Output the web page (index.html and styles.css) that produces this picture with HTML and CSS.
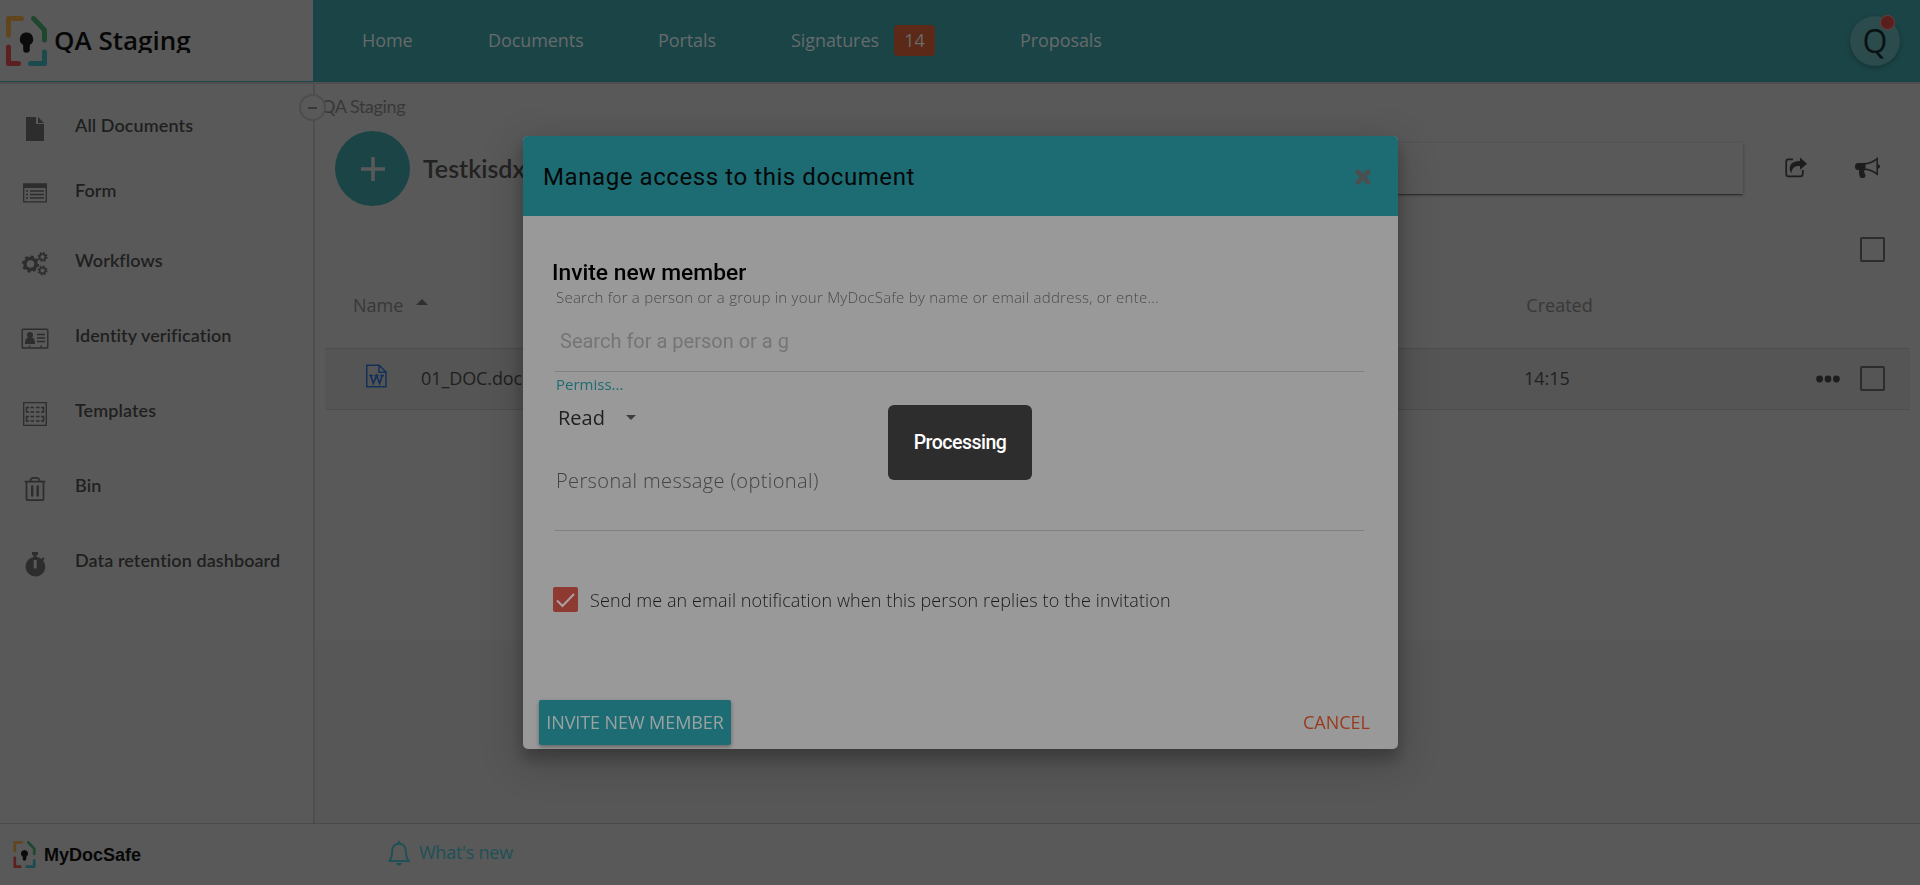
FILE: index.html
```html
<!DOCTYPE html>
<html lang="en">
<head>
<meta charset="utf-8">
<title>QA Staging</title>
<link rel="stylesheet" href="styles.css">
</head>
<body>
<svg class="defs" width="0" height="0">
  <symbol id="logo" viewBox="0 0 41 50">
    <g fill="none" stroke-width="5" stroke-linecap="round" stroke-linejoin="round">
      <path stroke="#60451f" d="M2.5 19V2.5H15.5"/>
      <path stroke="#1f472f" d="M27.5 2.5L38.500 14V24"/>
      <path stroke="#5c2020" d="M2.500 31V47.500H12.500"/>
      <path stroke="#1d4a4e" d="M38.500 36V47.500H24.500"/>
    </g>
    <path fill="#0b0b0b" d="M20.500 16.500a6.700 6.700 0 0 1 3.300 12.500v4.500a3.300 3.300 0 0 1-6.600 0V29a6.700 6.700 0 0 1 3.300-12.500z"/>
  </symbol>
</svg>
<div class="app">
  <header class="top">
    <div class="brand"><svg class="brand-logo"><use href="#logo"/></svg><span class="brand-name">QA Staging</span></div>
    <nav class="nav">
      <a class="n1">Home</a><a class="n2">Documents</a><a class="n3">Portals</a><a class="n4">Signatures</a><span class="badge">14</span><a class="n5">Proposals</a>
      <div class="avatar">Q<i class="dot"></i></div>
    </nav>
  </header>
  <div class="body">
    <aside class="side">
      <span class="collapse"></span>
      <a class="item i1"><svg viewBox="0 0 28 28"><path fill="#2d2d2d" d="M5 2h10v7h8v17H5zM17 2l6 6h-6z"/></svg>All Documents</a>
      <a class="item i2"><svg viewBox="0 0 28 28"><path fill="none" stroke="#2d2d2d" stroke-width="1.300" d="M2.700 4.200h22.600v17.600H2.700z"/><path fill="#2d2d2d" d="M2 3.500h24V8H2z"/><path stroke="#2d2d2d" stroke-width="1.400" d="M5 11h2M5 14.500h2M5 18h2M9 11h14M9 14.500h14M9 18h14"/></svg>Form</a>
      <a class="item i3"><svg viewBox="0 0 28 28"><g fill="none" stroke="#2d2d2d"><circle cx="9.500" cy="14" r="5.500" stroke-width="3.400"/><circle cx="9.500" cy="14" r="7.600" stroke-width="2" stroke-dasharray="3 2.969"/><circle cx="21.500" cy="7" r="2.900" stroke-width="1.600"/><circle cx="21.500" cy="7" r="4.300" stroke-width="1.500" stroke-dasharray="1.700 1.677"/><circle cx="21.500" cy="20.500" r="2.900" stroke-width="1.600"/><circle cx="21.500" cy="20.500" r="4.300" stroke-width="1.500" stroke-dasharray="1.700 1.677"/></g></svg>Workflows</a>
      <a class="item i4"><svg viewBox="0 0 28 28"><rect x="1.200" y="4.200" width="25.600" height="18.800" rx="1" fill="none" stroke="#2d2d2d" stroke-width="1.400"/><circle cx="9" cy="10" r="3" fill="#2d2d2d"/><path fill="#2d2d2d" d="M4 19c0-4 1-6 3-6.500h4c2 .5 3 2.500 3 6.500z"/><path stroke="#2d2d2d" stroke-width="1.500" d="M16 9.500h8M16 13h8M16 16.500h8M8.500 20.500v2M20 20.500v2"/></svg>Identity verification</a>
      <a class="item i5"><svg viewBox="0 0 28 28"><path fill="none" stroke="#2d2d2d" stroke-width="1.300" d="M2.700 2.700h22.600v22.600H2.700z"/><path fill="none" stroke="#2d2d2d" stroke-width="1.500" d="M8 7.500H5.500v4.500H8M20 7.500h2.500v4.500H20M8 16.500H5.500V21H8M20 16.500h2.500V21H20M9.500 7.500h3.500M15 7.500h3.500M9.500 12h3.500M15 12h3.500M9.500 16.500h3.500M15 16.500h3.500M9.500 21h3.500M15 21h3.500"/></svg>Templates</a>
      <a class="item i6"><svg viewBox="0 0 28 28"><path fill="none" stroke="#2d2d2d" stroke-width="1.700" d="M3.700 6.700h20.600M5.500 7v17.300q0 .8.800.8h15.400q.8 0 .8-.8V7M9 6.500q1-3.600 3-3.600h4q2 0 3 3.600"/><path stroke="#2d2d2d" stroke-width="2.400" stroke-linecap="round" d="M11.200 11.500v9M16.700 11.500v9"/></svg>Bin</a>
      <a class="item i7"><svg viewBox="0 0 28 28"><path fill="#2d2d2d" fill-rule="evenodd" d="M11 2h6v3h-1.500v2c2 .2 3.600 1 5 2l1.500-1.700 1.600 1.400-1.500 1.800a9.800 9.800 0 1 1-9.600-3.500V5H11zM12.700 10v8.500h3V10z"/></svg>Data retention dashboard</a>
    </aside>
    <main class="main">
      <div class="crumb">QA Staging</div>
      <div class="tools">
        <span class="add"><svg width="24" height="24"><path stroke="#595959" stroke-width="3.600" d="M12 0v24M0 12h24"/></svg></span>
        <h1>Testkisdx</h1>
        <div class="search"></div>
        <svg class="share" viewBox="0 0 22 20"><path fill="none" stroke="#1d1d1d" stroke-width="1.700" d="M8 1.900H3.500Q1.200 1.900 1.200 4.200v12Q1.200 18.900 3.500 18.900H15q2.800 0 2.800-2.700v-3.800"/><path fill="#1d1d1d" d="M15 0l7 6.200-7 6V8.500c-5 0-7.600.8-8.800 7.500C2.500 9 6 3.600 15 3.600z"/></svg>
        <svg class="horn" viewBox="0 0 25 21"><path fill="#1d1d1d" d="M3 5.500h7.500v7H9.500c-.8 1.500 0 3.200 1 5l-.6 2.400c-1.700.8-3.600.8-4.700 0C3.800 17 3.900 15 4.200 12.500H3Q0 12.500 0 9t3-3.500z"/><path fill="none" stroke="#1d1d1d" stroke-width="1.500" d="M9 6.300c5 0 9-1.700 13.200-5.200v15.600C18 13.500 14 11.800 9 11.800"/><path fill="#1d1d1d" d="M23 6.800q2 .6 2 2.200t-2 2.300z"/></svg>
      </div>
      <div class="selectall"><span class="box"></span></div>
      <div class="thead"><span>Name</span><i class="up"></i><span class="created">Created</span></div>
      <div class="row">
        <svg class="word" viewBox="0 0 21 23"><path fill="none" stroke="#14305a" stroke-width="1.500" d="M.8.8h12.400l6.800 6.700v14.700H.8zM13 .8v7h7"/><path fill="none" stroke="#14305a" stroke-width="1.700" d="M3 11h4M8.500 11h4M14 11h4M4.800 11l2.500 8 3.200-8 3.200 8 2.500-8"/></svg>
        <span class="file">01_DOC.doc</span>
        <span class="time">14:15</span>
        <svg class="more" width="24" height="8"><g fill="#1d1d1d"><circle cx="3.600" cy="4" r="3.400"/><circle cx="12" cy="4" r="3.400"/><circle cx="20.400" cy="4" r="3.400"/></g></svg>
        <span class="box"></span>
      </div>
      <div class="rest"></div>
    </main>
  </div>
  <footer class="foot">
    <svg class="foot-logo"><use href="#logo"/></svg><b>MyDocSafe</b>
    <svg class="bell" viewBox="0 0 22 25"><path fill="none" stroke="#1d5156" stroke-width="2" stroke-linejoin="round" d="M1.200 20c2-2.300 3-4 3-10.500C4.500 5 7.500 2.700 11 2.700s6.500 2.300 6.800 6.800c0 6.500 1 8.200 3 10.500z"/><path fill="#1d5156" d="M9.700 0h2.600v3H9.700zM8 22h6q-.8 2.700-3 2.700T8 22z"/></svg><span class="new">What's new</span>
  </footer>
</div>
<div class="overlay">
  <section class="modal">
    <div class="mhead"><span>Manage access to this document</span><svg width="16" height="16" viewBox="0 0 16 16"><path stroke="#4a4f50" stroke-width="5" stroke-linecap="round" d="M3 3l10 10M13 3L3 13"/></svg></div>
    <div class="mbody">
      <h2>Invite new member</h2>
      <p class="hint">Search for a person or a group in your MyDocSafe by name or email address, or ente...</p>
      <div class="field">Search for a person or a g</div>
      <p class="perm">Permiss...</p>
      <div class="select">Read<i></i></div>
      <div class="message">Personal message (optional)</div>
      <div class="check"><svg width="25" height="25"><rect width="25" height="25" rx="2" fill="#8f3933"/><path fill="none" stroke="#a9a2a1" stroke-width="2" d="M4 13.500l5.500 5.500L21 7"/></svg><span>Send me an email notification when this person replies to the invitation</span></div>
    </div>
    <div class="mfoot"><span class="invite">INVITE NEW MEMBER</span><span class="cancel">CANCEL</span></div>
  </section>
</div>
<div class="overlay"><div class="toast">Processing</div></div>
</body>
</html>
```

FILE: styles.css
```css
* { box-sizing: border-box; }
body { margin: 0; background: #595959; font-family: "Open Sans", "Noto Sans", sans-serif; font-size: 18px; color: #1f1f1f; overflow: hidden; }
.defs { display: block; }
h1, h2, p { margin: 0; }
svg { flex: none; display: block; }
span, a, b { white-space: nowrap; }
.app { height: 885px; display: flex; flex-direction: column; }

.top { height: 84px; display: flex; border-bottom: 2px solid #4e4e4e; flex: none; }
.brand { width: 313px; border-bottom: 1px solid #1d484b; display: flex; align-items: center; padding-left: 6px; }
.brand-logo { width: 41px; height: 50px; }
.brand-name { margin-left: 7px; font-weight: 600; font-size: 26px; line-height: 30px; height: 28px; margin-top: -3px; overflow: hidden; color: #070707; }
.nav { flex: 1; background: #1b4446; display: flex; align-items: center; color: #666b6b; padding: 0 0 1px 49px; }
.n1 { width: 126px; }
.n2 { width: 170px; }
.n3 { width: 133px; }
.n4 { width: 103px; }
.nav a { margin-top: -1px; letter-spacing: -.08px; }
.badge { width: 41px; height: 31px; border-radius: 4px; background: #5c2918; text-align: center; line-height: 30px; margin-right: 85px; }
.avatar { position: relative; margin-left: auto; margin-right: 20px; width: 50px; height: 50px; border-radius: 50%; background: #2b4b4d; box-shadow: 0 2px 5px rgba(0,0,0,.26); color: #0a1112; font-size: 32px; line-height: 50px; text-align: center; }
.dot { position: absolute; right: 5px; top: -1px; width: 15px; height: 15px; border-radius: 50%; background: #591f1d; border: 1px solid #743a38; }

.body { flex: 1; display: flex; min-height: 0; }
.side { position: relative; width: 315px; border-right: 2px solid #4e4e4e; padding: 11px 0 0 21px; font-family: Lato, sans-serif; font-weight: 600; letter-spacing: .08px; flex: none; }
.item { display: flex; align-items: center; height: 60px; margin-bottom: 15px; color: #1f1f1f; }
.item svg { width: 28px; height: 28px; margin: 7px 26px 0 0; }
.i1 { margin-bottom: 5px; }
.i2 { margin-bottom: 10px; }
.collapse { position: absolute; left: 299px; top: 10px; width: 27px; height: 27px; border: 2px solid #4d4d4d; border-radius: 50%; background: #595959; display: flex; align-items: center; justify-content: center; }
.collapse::after { content: ""; width: 9px; height: 2px; background: #383838; }

.main { flex: 1; min-width: 0; display: flex; flex-direction: column; padding-left: 10px; }
.crumb { font-family: Lato, sans-serif; color: #383838; height: 47px; line-height: 44px; letter-spacing: -.4px; margin-left: -4px; }
.tools { display: flex; align-items: center; height: 75px; padding-left: 10px; }
.add { width: 75px; height: 75px; border-radius: 50%; background: #1b4446; display: flex; align-items: center; justify-content: center; flex: none; }
h1 { font: 600 25px/40px Lato, sans-serif; margin: -2px 0 0 13px; width: 120px; color: #222; }
.search { flex: 1; height: 51px; box-shadow: 0 1px 3px rgba(0,0,0,.3), 0 2px 1px -1px rgba(0,0,0,.35); }
.share { width: 22px; height: 21px; margin: -3px 48px 0 42px; }
.horn { width: 25px; height: 22px; margin: -1px 40px 0 0; }
.box { width: 25px; height: 25px; border: 2px solid #2c2c2c; border-radius: 2px; flex: none; }
.selectall { height: 88px; display: flex; align-items: center; justify-content: flex-end; padding: 0 35px 1px 0; }
.thead { display: flex; align-items: center; height: 54px; padding: 0 0 32px 28px; color: #383838; }
.up { border: 6px solid transparent; border-top: 0; border-bottom-color: #303030; margin: -6px 0 0 13px; }
.created { margin-left: 1098px; }
.row { height: 62px; margin-right: 10px; display: flex; align-items: center; background: #555; border-top: 1px solid #4d4d4d; border-bottom: 1px solid #4d4d4d; padding-left: 41px; flex: none; }
.word { width: 21px; height: 24px; margin-top: -7px; }
.file { margin: -2px 0 0 34px; width: 1103px; letter-spacing: -.1px; }
.time { width: 292px; margin-top: -2px; }
.row .box { margin: -1px 0 0 20px; }
.rest { margin: 231px 0 0 -10px; flex: 1; background: #575757; }

.foot { height: 62px; border-top: 1px solid #4a4a4a; display: flex; align-items: center; padding-left: 13px; flex: none; }
.foot-logo { width: 23px; height: 27px; }
.foot b { font: bold 18px/24px "Liberation Sans", sans-serif; color: #070707; width: 344px; margin-left: 8px; }
.bell { width: 22px; height: 25px; margin-top: -2px; }
.new { color: #1d5156; margin: -5px 0 0 9px; letter-spacing: -.25px; }

.overlay { position: fixed; inset: 0; display: flex; align-items: center; justify-content: center; }
.modal { width: 875px; height: 613px; border-radius: 5px; background: #999; box-shadow: 0 9px 14px 2px rgba(0,0,0,.2), 0 12px 38px 5px rgba(0,0,0,.17); display: flex; flex-direction: column; margin-left: 1px; }
.mhead { height: 80px; background: #1e6c73; border-radius: 5px 5px 0 0; display: flex; align-items: center; justify-content: space-between; padding: 1px 27px 0 20px; font: 24px Roboto, sans-serif; letter-spacing: .58px; color: #040808; }
.mbody { flex: 1; padding: 42px 34px 0 32px; }
h2 { font: 500 22.800px/30px Roboto, sans-serif; margin-left: -3px; color: #000; }
.hint { font-size: 15px; font-weight: 350; line-height: 18px; height: 20px; color: #4a4a4a; padding-left: 1px; letter-spacing: .25px; white-space: nowrap; }
.field { font: 20px/66px Roboto, sans-serif; height: 64px; border-bottom: 1px solid #808080; padding-left: 5px; color: #757575; }
.perm { font-size: 15px; line-height: 25px; color: #1d6c72; padding-left: 1px; }
.select { display: flex; align-items: center; font-size: 20px; height: 42px; padding: 0 0 2px 3px; color: #1f1f1f; }
.select i { border: 5px solid transparent; border-bottom: 0; border-top-color: #3d3d3d; margin-left: 21px; }
.message { height: 92px; line-height: 84px; font-size: 20px; font-weight: 350; letter-spacing: .38px; color: #434343; border-bottom: 1px solid #808080; padding-left: 1px; }
.check { display: flex; align-items: center; margin: 56px 0 0 -2px; gap: 12px; color: #1a1a1a; font-weight: 350; letter-spacing: .1px; }
.mfoot { display: flex; justify-content: space-between; align-items: center; height: 45px; margin: 0 28px 4px 16px; }
.invite { width: 192px; height: 45px; line-height: 45px; text-align: center; letter-spacing: -.08px; background: #1e6c73; border-radius: 2px; color: #9aa3a4; box-shadow: 0 2px 4px rgba(0,0,0,.35); }
.cancel { color: #983a1d; margin-top: -2px; }
.toast { width: 144px; height: 75px; border-radius: 6px; background: #2d2d2d; color: #fff; font: 500 19.500px/76px Roboto, sans-serif; letter-spacing: -.5px; text-align: center; }
```
